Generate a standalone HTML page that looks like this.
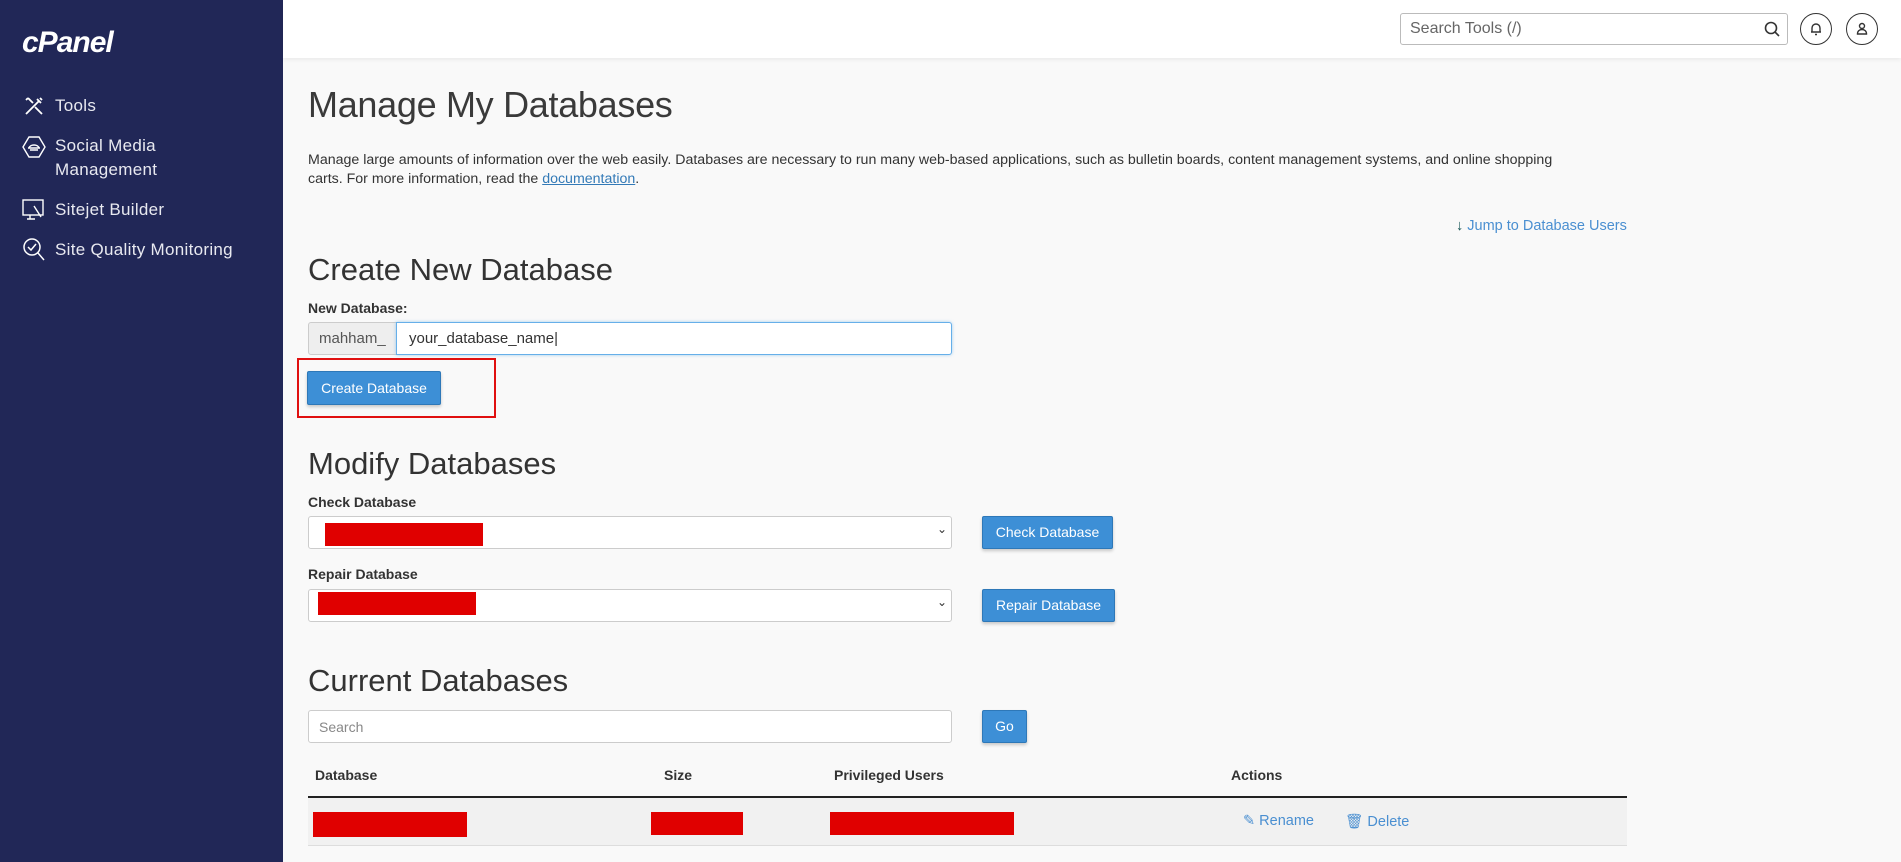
<!DOCTYPE html>
<html><head><meta charset="utf-8"><style>
*{box-sizing:border-box;margin:0;padding:0}
body{width:1901px;height:862px;overflow:hidden;background:#f9f9f9;font-family:"Liberation Sans",sans-serif;color:#333;position:relative}
.abs{position:absolute}
#side{left:0;top:0;width:283px;height:862px;background:#212757}
.logo{left:22px;top:26px;color:#fff;font-size:30px;font-weight:bold;font-style:italic;letter-spacing:-1px}
.mi{color:#e8e9f0;font-size:17px;left:55px;line-height:24px;letter-spacing:.3px}
#hdr{left:283px;top:0;width:1618px;height:58px;background:#fff;box-shadow:0 2px 4px rgba(0,0,0,.06)}
.search{left:1400px;top:13px;width:388px;height:32px;border:1px solid #bbb;border-radius:3px;background:#fff;color:#666;font-size:16px;padding:6px 9px}
.circ{width:32px;height:32px;border:1.5px solid #333;border-radius:50%}
h1{position:absolute;left:308px;top:84px;font-size:36px;font-weight:normal;color:#3a3a3a;letter-spacing:-.3px}
h2{position:absolute;left:308px;font-size:31px;font-weight:normal;color:#333}
.p{left:308px;top:151px;width:1255px;font-size:14.2px;line-height:19px;color:#333}
a{color:#337ab7}
.lbl{left:308px;font-size:14px;font-weight:bold;color:#333}
.box{background:#fff;border:1px solid #ccc;border-radius:3px}
.btn{background:#3d8fd6;color:#fff;font-size:14px;border:1px solid #2e78b8;border-radius:2px;text-align:center;box-shadow:0 2px 3px rgba(0,0,0,.2)}
.red{background:#e00000}
.th{top:767px;font-size:14px;font-weight:bold;color:#333}
.lnk{color:#4a8fd1;font-size:14.5px}
</style></head><body>
<div id="side" class="abs"></div>
<div class="abs logo">cPanel</div>
<svg class="abs" style="left:23px;top:95px" width="22" height="22" viewBox="0 0 22 22" fill="none" stroke="#fff" stroke-width="1.8"><path d="M3 19L16 6M14 4l4 4M17 3l2 2M5 3l5 5M3 5l2-2M12 12l7 7"/></svg>
<div class="abs mi" style="top:94px">Tools</div>
<svg class="abs" style="left:22px;top:135px" width="24" height="24" viewBox="0 0 24 24" fill="none" stroke="#fff" stroke-width="1.4"><path d="M7 2h10l6 10-6 10H7L1 12z"/><path d="M7 13c1-4 9-4 10 0M6 13h12M8 15h8"/></svg>
<div class="abs mi" style="top:134px">Social Media<br>Management</div>
<svg class="abs" style="left:22px;top:198px" width="24" height="24" viewBox="0 0 24 24" fill="none" stroke="#fff" stroke-width="1.4"><rect x="1" y="2" width="20" height="15"/><path d="M8 17v4M5 21h8M12 8l7 11"/></svg>
<div class="abs mi" style="top:198px">Sitejet Builder</div>
<svg class="abs" style="left:22px;top:237px" width="24" height="26" viewBox="0 0 24 26" fill="none" stroke="#fff" stroke-width="1.5"><circle cx="10" cy="10" r="8"/><path d="M6 10l3 3 5-6M16 16l6 7"/></svg>
<div class="abs mi" style="top:238px">Site Quality Monitoring</div>
<div id="hdr" class="abs"></div>
<div class="abs search">Search Tools (/)</div>
<svg class="abs" style="left:1763px;top:20px" width="18" height="18" viewBox="0 0 18 18" fill="none" stroke="#333" stroke-width="1.6"><circle cx="8" cy="8" r="5.5"/><path d="M12 12l4 4"/></svg>
<div class="abs circ" style="left:1800px;top:13px"></div>
<svg class="abs" style="left:1808px;top:21px" width="16" height="16" viewBox="0 0 16 16" fill="none" stroke="#333" stroke-width="1.4"><path d="M4 11V7a4 4 0 018 0v4zM3 11h10M7 13.5h2"/></svg>
<div class="abs circ" style="left:1846px;top:13px"></div>
<svg class="abs" style="left:1854px;top:21px" width="16" height="16" viewBox="0 0 16 16" fill="none" stroke="#333" stroke-width="1.4"><circle cx="8" cy="5" r="2.5"/><path d="M3.5 13c0-3 2-4.5 4.5-4.5s4.5 1.5 4.5 4.5z"/></svg>

<h1>Manage My Databases</h1>
<div class="abs p">Manage large amounts of information over the web easily. Databases are necessary to run many web-based applications, such as bulletin boards, content management systems, and online shopping carts. For more information, read the <a href="#">documentation</a>.</div>
<div class="abs lnk" style="left:1456px;top:218px;color:#4a8fd1"><span style="color:#1d5a5a">↓</span> Jump to Database Users</div>

<h2 style="top:252px">Create New Database</h2>
<div class="abs lbl" style="top:300px">New Database:</div>
<div class="abs" style="left:308px;top:322px;width:89px;height:33px;background:#eee;border:1px solid #ccc;border-radius:3px 0 0 3px;font-size:15px;color:#555;padding:7px 10px">mahham_</div>
<div class="abs box" style="left:396px;top:322px;width:556px;height:33px;border-color:#66afe9;box-shadow:0 0 3px rgba(102,175,233,.6);border-radius:0 3px 3px 0;font-size:15px;color:#333;padding:7px 12px">your_database_name|</div>
<div class="abs btn" style="left:307px;top:371px;width:134px;height:34px;line-height:32px">Create Database</div>
<div class="abs" style="left:297px;top:358px;width:199px;height:60px;border:2px solid #e01010"></div>

<h2 style="top:446px">Modify Databases</h2>
<div class="abs lbl" style="top:494px">Check Database</div>
<div class="abs box" style="left:308px;top:516px;width:644px;height:33px"></div>
<div class="abs red" style="left:325px;top:523px;width:158px;height:23px"></div>
<div class="abs" style="left:937px;top:522px;font-size:12px">⌄</div>
<div class="abs btn" style="left:982px;top:516px;width:131px;height:33px;line-height:31px">Check Database</div>
<div class="abs lbl" style="top:566px">Repair Database</div>
<div class="abs box" style="left:308px;top:589px;width:644px;height:33px"></div>
<div class="abs red" style="left:318px;top:592px;width:158px;height:23px"></div>
<div class="abs" style="left:937px;top:595px;font-size:12px">⌄</div>
<div class="abs btn" style="left:982px;top:589px;width:133px;height:33px;line-height:31px">Repair Database</div>

<h2 style="top:663px">Current Databases</h2>
<div class="abs box" style="left:308px;top:710px;width:644px;height:33px;font-size:14px;color:#888;padding:8px 10px">Search</div>
<div class="abs btn" style="left:982px;top:710px;width:45px;height:33px;line-height:31px">Go</div>
<div class="abs th" style="left:315px">Database</div>
<div class="abs th" style="left:664px">Size</div>
<div class="abs th" style="left:834px">Privileged Users</div>
<div class="abs th" style="left:1231px">Actions</div>
<div class="abs" style="left:308px;top:796px;width:1319px;height:2px;background:#222"></div>
<div class="abs" style="left:308px;top:798px;width:1319px;height:48px;background:#f1f1f1;border-bottom:1px solid #ddd"></div>
<div class="abs red" style="left:313px;top:812px;width:154px;height:25px"></div>
<div class="abs red" style="left:651px;top:812px;width:92px;height:23px"></div>
<div class="abs red" style="left:830px;top:812px;width:184px;height:23px"></div>
<div class="abs lnk" style="left:1243px;top:813px">✎ Rename</div>
<div class="abs lnk" style="left:1345px;top:813px">🗑 Delete</div>
</body></html>
